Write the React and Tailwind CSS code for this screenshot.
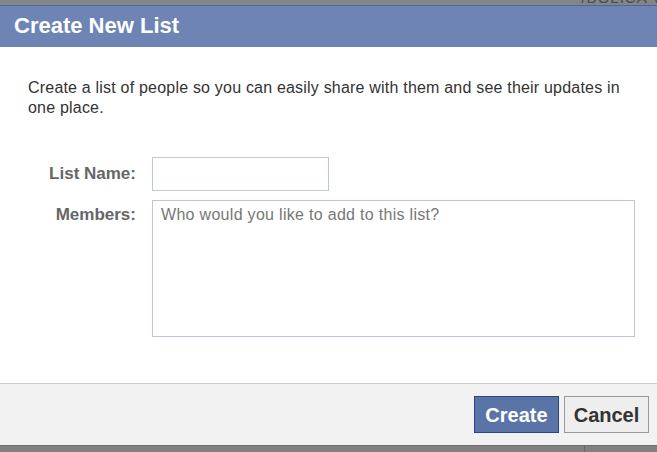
export default function App() {
  return (
    <div className="w-[657px] h-[452px] overflow-hidden flex flex-col bg-white font-['Liberation_Sans',Arial,sans-serif]">
      {/* page behind the dialog, mostly hidden */}
      <div className="h-[5px] bg-[#858585] overflow-hidden flex justify-end -mr-[6px]">
        <span className="text-[15px] leading-[15px] -mt-[10px] text-[#4a4a4a] tracking-[1px] whitespace-nowrap">/BOLICA V</span>
      </div>

      <div className="h-[42px] bg-[#6d84b4] border-t border-[#4c66a4] flex items-center pl-[14px]">
        <h2 className="text-[22px] font-bold text-white leading-none -mt-[1px]">Create New List</h2>
      </div>

      <div className="h-[336px] pl-[28px] pt-[31px]">
        <p className="w-[600px] text-[16px] leading-[20px] tracking-[0.2px] text-[#333]">
          Create a list of people so you can easily share with them and see their updates in one place.
        </p>

        <div className="mt-[39px] flex items-center">
          <label className="w-[108px] shrink-0 text-right text-[17px] font-bold text-[#666]">List Name:</label>
          <input
            type="text"
            className="ml-[16px] shrink-0 w-[177px] h-[34px] border border-[#bdc7d8] px-[8px] text-[15px] outline-none"
          />
        </div>

        <div className="mt-[9px] flex items-start">
          <label className="w-[108px] shrink-0 text-right text-[17px] leading-[20px] font-bold text-[#666] pt-[5px]">Members:</label>
          <textarea
            placeholder="Who would you like to add to this list?"
            className="ml-[16px] shrink-0 w-[483px] h-[137px] border border-[#bdc7d8] px-[8px] pt-[4px] text-[16px] leading-[20px] tracking-[0.3px] resize-none outline-none placeholder:text-[#777]"
          />
        </div>
      </div>

      <div className="h-[62px] border-t border-[#cccccc] bg-[#f2f2f2] flex justify-end items-start pt-[12px] pr-[8px] gap-[5px]">
        <button className="w-[85px] h-[37px] bg-[#5b74a8] border border-[#29447e] text-white text-[20px] font-bold flex items-center justify-center">
          Create
        </button>
        <button className="w-[85px] h-[37px] bg-[#eeeeee] border border-[#999999] text-[#333] text-[20px] font-bold flex items-center justify-center">
          Cancel
        </button>
      </div>

      <div className="h-[7px] flex border-t border-[#6b6b6b]">
        <div className="w-[585px] bg-[#808080] border-r border-[#666]" />
        <div className="flex-1 bg-[#808080]" />
      </div>
    </div>
  )
}
